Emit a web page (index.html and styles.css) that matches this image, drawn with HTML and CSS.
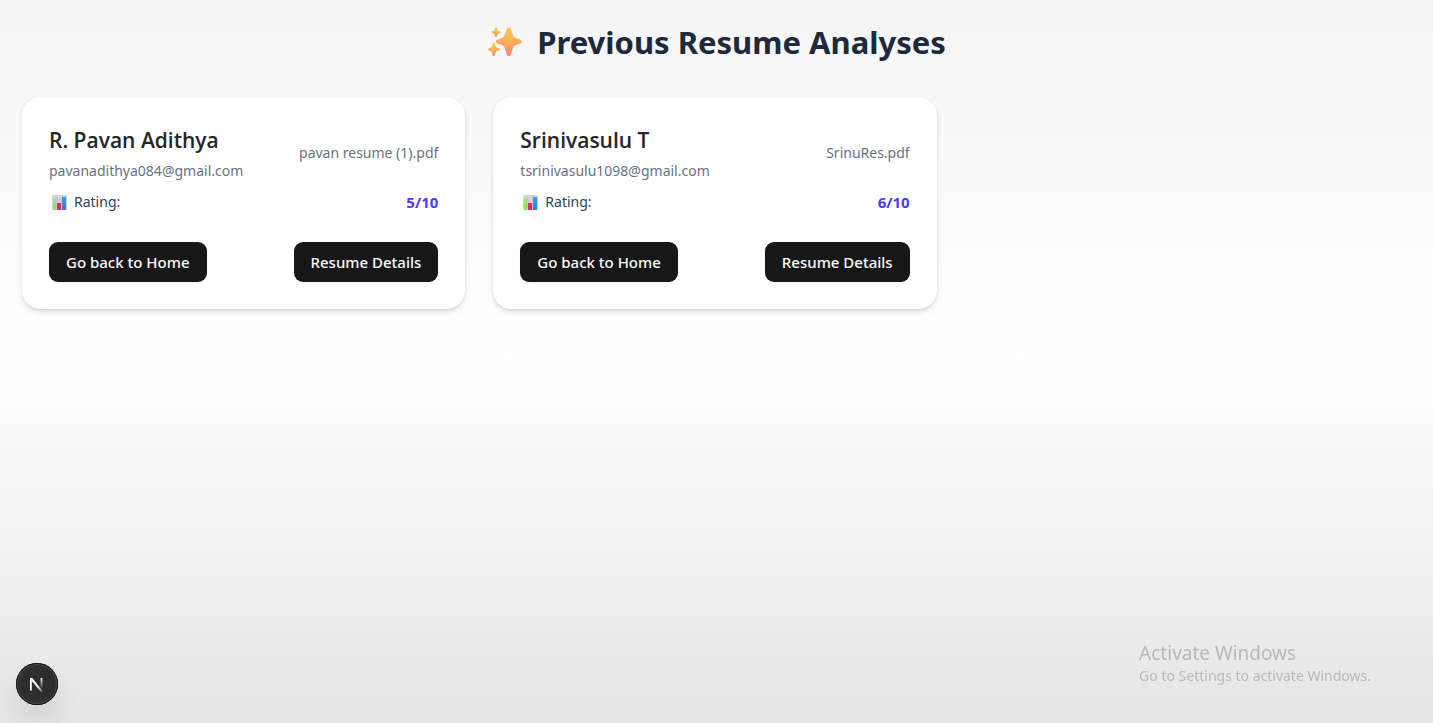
FILE: index.html
```
<!DOCTYPE html>
<html lang="en">
<head>
<meta charset="utf-8">
<meta name="viewport" content="width=device-width, initial-scale=1">
<title>Previous Resume Analyses</title>
<link rel="stylesheet" href="styles.css">
</head>
<body>
<svg class="defs" width="0" height="0" aria-hidden="true">
  <defs>
    <linearGradient id="gold" x1="0" y1="0" x2="0" y2="1"><stop offset="0" stop-color="#fdc955"/><stop offset="0.5" stop-color="#fdae5a"/><stop offset="1" stop-color="#fd8470"/></linearGradient>
    <linearGradient id="green" x1="0" y1="0" x2="1" y2="1"><stop offset="0" stop-color="#a5f065"/><stop offset="1" stop-color="#7bdc62"/></linearGradient>
    <linearGradient id="blue" x1="0" y1="0" x2="0" y2="1"><stop offset="0" stop-color="#2ba0ee"/><stop offset="1" stop-color="#3c78c8"/></linearGradient>
    <symbol id="chart" viewBox="0 0 15 15">
      <rect width="15" height="15" rx="1" fill="#d9d2e2"/>
      <path d="M0 5H15M0 10H15M5 0V15M10 0V15" stroke="#beb5ca" stroke-width="0.6"/>
      <rect x="1" y="3" width="3" height="12" fill="url(#green)"/>
      <rect x="5" y="8" width="4" height="7" fill="#e5256d"/>
      <rect x="10" y="2" width="4" height="13" fill="url(#blue)"/>
    </symbol>
  </defs>
</svg>
<main class="page">
  <h1 class="title">
    <svg class="sparkles" viewBox="0 0 34 30" aria-hidden="true">
      <path fill="url(#gold)" d="M20.800.300c1.100 0 1.800.800 2.200 2l2 5.800c.5 1.500 1.300 2.300 2.800 2.800l4.200 1.500c1.100.4 1.800 1.100 1.800 2s-.7 1.600-1.800 2l-4.200 1.500c-1.500.5-2.300 1.400-2.800 2.900l-2 6.200c-.4 1.300-1.100 2.100-2.200 2.100s-1.800-.8-2.200-2.100l-2-6.200c-.5-1.500-1.300-2.400-2.800-2.900l-4.200-1.500c-1.100-.4-1.800-1.100-1.800-2s.7-1.600 1.800-2l4.200-1.500c1.500-.5 2.300-1.300 2.800-2.800l2-5.800c.4-1.200 1.100-2 2.200-2z"/>
      <path fill="url(#gold)" d="M8 .4c.5 0 .7.3.9.9l.5 1.6c.2.6.5.9 1.1 1.1l1.2.4c.6.2.9.5.9.9s-.3.7-.9.9l-1.2.4c-.6.2-.9.5-1.1 1.1l-.5 1.5c-.2.6-.4.9-.9.9s-.7-.3-.9-.9L6.600 7.700c-.2-.6-.5-.9-1.100-1.100l-1.200-.4c-.6-.2-.9-.5-.9-.9s.3-.7.900-.9l1.200-.4c.6-.2.900-.5 1.100-1.100l.5-1.600c.2-.6.4-.9.900-.900z"/>
      <path fill="url(#gold)" d="M5.800 15.600c.6 0 .9.400 1.100 1.100l.8 2.400c.3.900.7 1.300 1.500 1.600l1.700.6c.7.2 1 .6 1 1.100s-.3.900-1 1.100l-1.700.6c-.8.3-1.200.7-1.500 1.600l-.8 2.200c-.2.7-.5 1.100-1.100 1.100s-.9-.4-1.100-1.100l-.7-2.200c-.3-.9-.7-1.300-1.500-1.600l-1.500-.6c-.7-.2-1-.6-1-1.100s.3-.9 1-1.100l1.500-.6c.8-.3 1.200-.7 1.500-1.600l.7-2.400c.2-.7.5-1.100 1.100-1.100z"/>
    </svg>
    <span>Previous Resume Analyses</span>
  </h1>
  <section class="grid" aria-label="Analyses">
    <article class="card">
      <div class="row">
        <div>
          <h2 class="name">R. Pavan Adithya</h2>
          <p class="muted">pavanadithya084@gmail.com</p>
        </div>
        <span class="muted">pavan resume (1).pdf</span>
      </div>
      <div class="row rating">
        <span class="label"><svg class="chart" aria-hidden="true"><use href="#chart"/></svg>Rating:</span>
        <strong class="score">5/10</strong>
      </div>
      <div class="row actions">
        <button class="button" type="button">Go back to Home</button>
        <button class="button" type="button">Resume Details</button>
      </div>
    </article>
    <article class="card">
      <div class="row">
        <div>
          <h2 class="name">Srinivasulu T</h2>
          <p class="muted">tsrinivasulu1098@gmail.com</p>
        </div>
        <span class="muted">SrinuRes.pdf</span>
      </div>
      <div class="row rating">
        <span class="label"><svg class="chart" aria-hidden="true"><use href="#chart"/></svg>Rating:</span>
        <strong class="score">6/10</strong>
      </div>
      <div class="row actions">
        <button class="button" type="button">Go back to Home</button>
        <button class="button" type="button">Resume Details</button>
      </div>
    </article>
  </section>
</main>
<button class="devtools" type="button" aria-label="Open Next.js Dev Tools">
  <svg viewBox="0 0 42 42" aria-hidden="true">
    <defs>
      <linearGradient id="diag" gradientUnits="userSpaceOnUse" x1="20" y1="20" x2="27" y2="30"><stop offset="0.3" stop-color="#fff"/><stop offset="1" stop-color="#fff" stop-opacity="0.1"/></linearGradient>
      <linearGradient id="stem" x1="0" y1="0" x2="0" y2="1"><stop offset="0" stop-color="#fff"/><stop offset="1" stop-color="#fff" stop-opacity="0"/></linearGradient>
    </defs>
    <rect x="14" y="15" width="1.8" height="12.5" fill="#fff"/>
    <path d="M14 15h2.200l10.400 13-1.400 1.300L14 15.800z" fill="url(#diag)"/>
    <rect x="24.6" y="15" width="1.8" height="11" fill="url(#stem)"/>
  </svg>
</button>
<aside class="watermark">
  <p class="watermark-title">Activate Windows</p>
  <p class="watermark-text">Go to Settings to activate Windows.</p>
</aside>
</body>
</html>
```
FILE: styles.css
```
* { box-sizing: border-box; }
body {
  margin: 0;
  min-height: 100vh;
  font-family: "Noto Sans", "Open Sans", sans-serif;
  font-size: 14px;
  line-height: 22px;
  color: #262626;
  background: linear-gradient(#f5f5f5, #fff 50%, #e5e5e5) no-repeat;
}
h1, h2, p { margin: 0; }
.defs { position: absolute; }
.page { padding: 22px 25px 22px 22px; }
.title {
  display: flex;
  align-items: center;
  justify-content: center;
  gap: 15px;
  margin-bottom: 35px;
  padding-left: 4px;
  font-size: 31px;
  line-height: 40px;
  font-weight: 700;
  color: #1d293d;
}
.sparkles { width: 34px; height: 30px; }
.grid {
  display: grid;
  grid-template-columns: repeat(3, minmax(0, 1fr));
  gap: 28px;
}
.card {
  padding: 27px;
  background: #fff;
  border-radius: 18px;
  box-shadow: 0 0 1px rgba(0, 0, 0, 0.12), 0 4px 7px -1px rgba(0, 0, 0, 0.1), 0 2px 4px -2px rgba(0, 0, 0, 0.15);
}
.row {
  display: flex;
  align-items: center;
  justify-content: space-between;
}
.name {
  margin-bottom: 4px;
  font-family: "Open Sans", "Noto Sans", sans-serif;
  font-size: 21px;
  line-height: 32px;
  font-weight: 600;
}
.muted { color: #6a7282; }
.rating { margin-top: 9px; }
.label {
  display: flex;
  align-items: center;
  gap: 7px;
  color: #314158;
}
.chart { width: 15px; height: 15px; margin-left: 3px; }
.score { font-size: 15px; color: #4f39f6; }
.actions { margin-top: 29px; }
.button {
  height: 40px;
  padding: 0 17px;
  border: 0;
  border-radius: 9px;
  background: #171717;
  color: #fafafa;
  font: inherit;
  font-size: 15px;
  font-weight: 500;
  box-shadow: 0 1px 2px rgba(0, 0, 0, 0.05);
}
.devtools {
  position: fixed;
  left: 16px;
  bottom: 18px;
  width: 42px;
  height: 42px;
  padding: 0;
  border: 0;
  border-radius: 50%;
  background: #2e2e2e;
  box-shadow: inset 0 0 0 1px #171717, inset 0 0 0 2px #4a4a4a, 0 16px 32px -8px rgba(0, 0, 0, 0.24);
}
.devtools svg { display: block; width: 42px; height: 42px; }
.watermark {
  position: fixed;
  right: 62px;
  bottom: 36px;
  color: #b9b9b9;
}
.watermark-title { font-size: 19px; line-height: 24px; }
.watermark-text { font-size: 14px; line-height: 22px; }
```
